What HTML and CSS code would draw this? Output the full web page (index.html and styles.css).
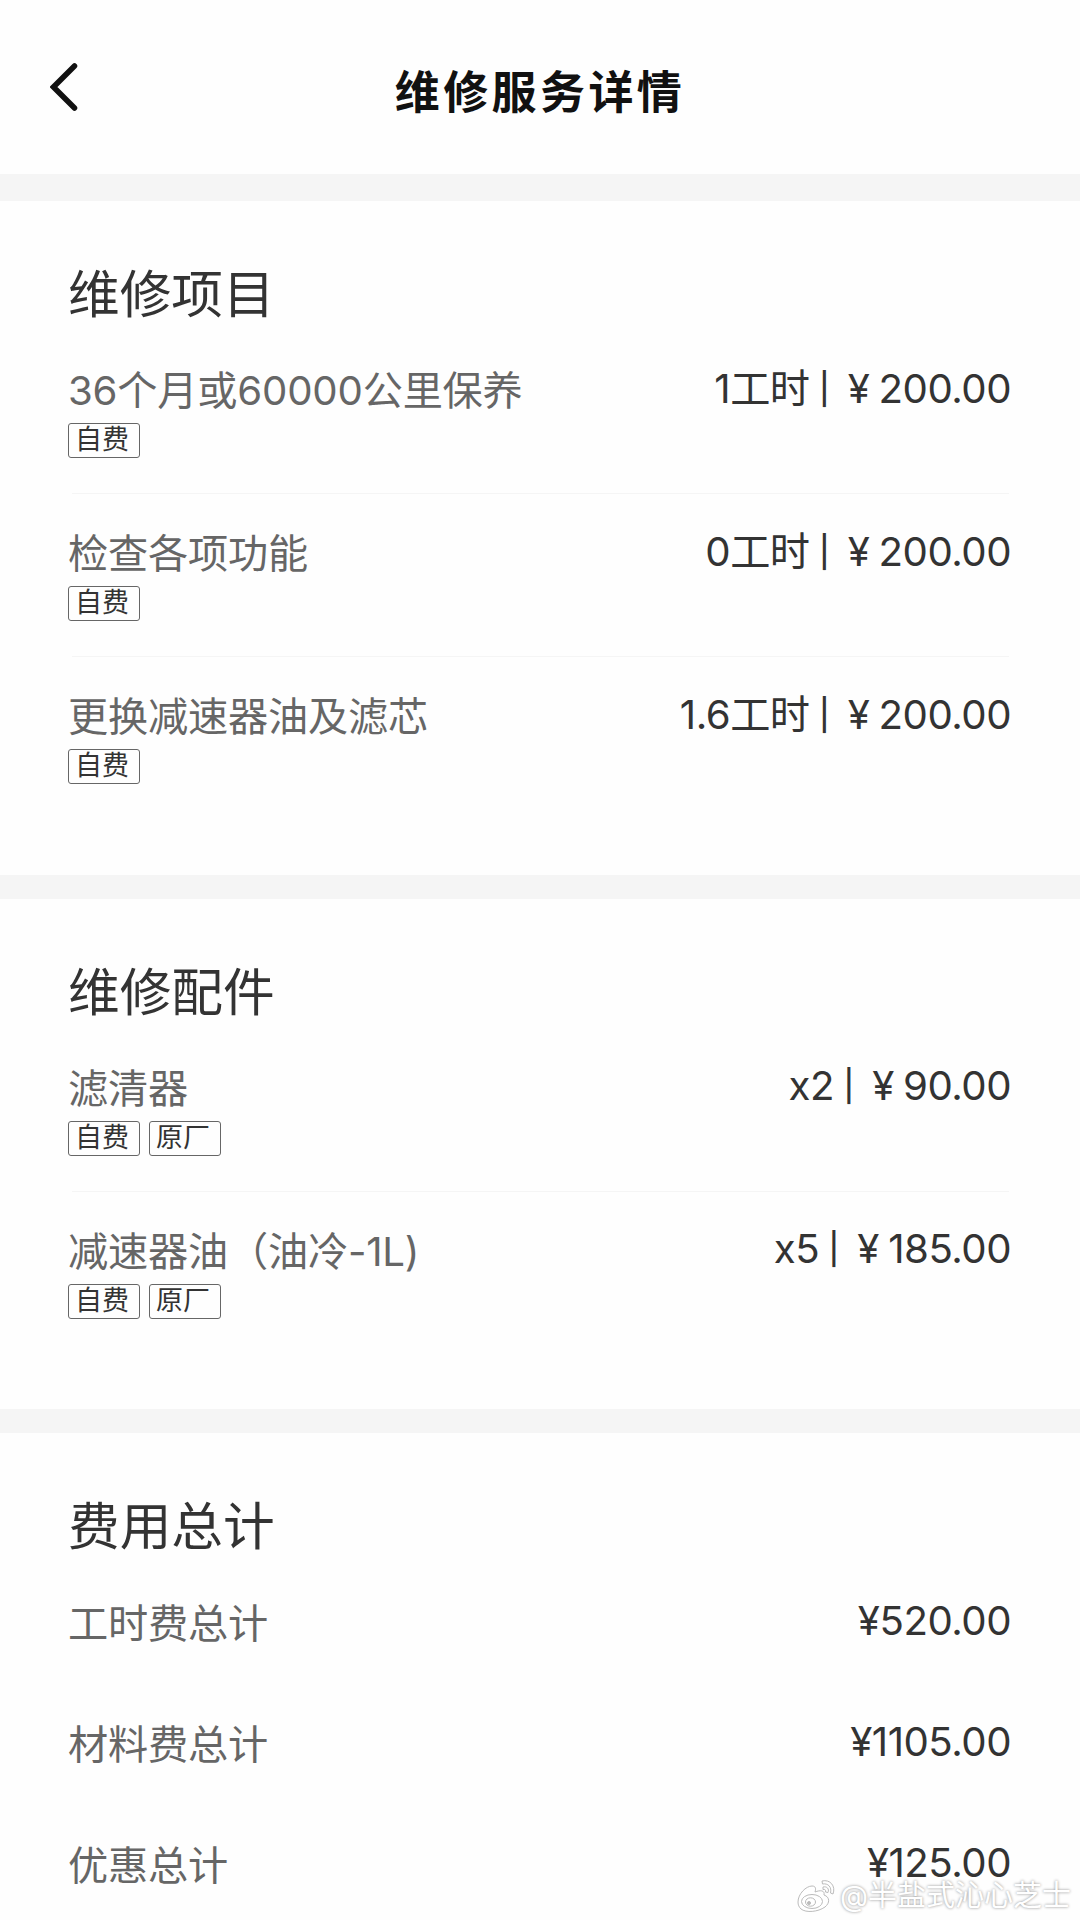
FILE: index.html
```html
<!DOCTYPE html>
<html lang="zh-CN">

<head>
  <meta charset="UTF-8">
  <meta name="viewport" content="width=device-width, initial-scale=1.0">
  <title>维修服务详情</title>
  <link rel="stylesheet" href="styles.css">
</head>

<body>
  <header class="header">
    <svg class="back" viewBox="0 0 28 48">
      <path d="M24.5 3 L3.5 24 L24.5 45" />
    </svg>
    <h1 class="title">维修服务详情</h1>
  </header>

  <section class="section">
    <h2>维修项目</h2>
    <div class="item">
      <div class="line">
        <span class="name">36个月或60000公里保养</span>
        <span class="price">1工时<i class="sep">|</i><span class="yen">¥</span>200.00</span>
      </div>
      <div class="tags"><span class="tag">自费</span></div>
    </div>
    <div class="item">
      <div class="line">
        <span class="name">检查各项功能</span>
        <span class="price">0工时<i class="sep">|</i><span class="yen">¥</span>200.00</span>
      </div>
      <div class="tags"><span class="tag">自费</span></div>
    </div>
    <div class="item">
      <div class="line">
        <span class="name">更换减速器油及滤芯</span>
        <span class="price">1.6工时<i class="sep">|</i><span class="yen">¥</span>200.00</span>
      </div>
      <div class="tags"><span class="tag">自费</span></div>
    </div>
  </section>

  <section class="section">
    <h2>维修配件</h2>
    <div class="item">
      <div class="line">
        <span class="name">滤清器</span>
        <span class="price">x2<i class="sep">|</i><span class="yen">¥</span>90.00</span>
      </div>
      <div class="tags"><span class="tag">自费</span><span class="tag">原厂</span></div>
    </div>
    <div class="item">
      <div class="line">
        <span class="name">减速器油（油冷-1L)</span>
        <span class="price">x5<i class="sep">|</i><span class="yen">¥</span>185.00</span>
      </div>
      <div class="tags"><span class="tag">自费</span><span class="tag">原厂</span></div>
    </div>
  </section>

  <section class="section">
    <h2>费用总计</h2>
    <div class="total">
      <span class="name">工时费总计</span>
      <span class="price">¥520.00</span>
    </div>
    <div class="total">
      <span class="name">材料费总计</span>
      <span class="price">¥1105.00</span>
    </div>
    <div class="total">
      <span class="name">优惠总计</span>
      <span class="price">¥125.00</span>
    </div>
  </section>

  <div class="watermark">
    <svg class="weibo" viewBox="0 0 40 34">
      <path d="M2 23 C2 15 10 7 16 7 C20 7 20 10 19 13 C24 11 29 11 28 16 C34 18 34 24 29 28 C22 33 10 34 5 30 C3 28 2 26 2 23 Z" />
      <ellipse cx="16" cy="22.5" rx="10.5" ry="7" />
      <ellipse cx="14.5" cy="23" rx="5" ry="4.2" />
      <circle class="pupil" cx="13" cy="24" r="1.5" />
      <path d="M26 2 C34 0 40 7 37 15 L34.5 14 C36 8 32 4 26.5 5 Z" />
      <path d="M27 8 C31 7 33.5 10 32 13.5 L29.5 13 C30 11 29 10 27 10.5 Z" />
    </svg>
    <span>@半盐式沁心芝士</span>
  </div>
</body>

</html>
```

FILE: styles.css
```css
* {
  box-sizing: border-box;
}

body {
  margin: 0;
  height: 1920px;
  overflow: hidden;
  position: relative;
  background-color: #fefefe;
  color: #333;
  font-family: Inter, "Noto Sans CJK SC", sans-serif;
}

.header {
  display: grid;
  grid-template-columns: 120px 1fr 120px;
  align-items: center;
  height: 174px;
}

.back {
  width: 28px;
  height: 48px;
  margin-left: 50px;
  fill: none;
  stroke: #111;
  stroke-width: 5.5;
  stroke-linecap: round;
}

.title {
  margin: 0;
  padding-top: 11px;
  font-size: 45px;
  line-height: 60px;
  letter-spacing: 3.4px;
  text-align: center;
  color: #111;
}

.section {
  border-top: 24px solid #f5f5f5;
  padding: 63px 69px 54px 68px;
}

.header + .section {
  border-top-width: 27px;
}

h2 {
  margin: 0 0 7px;
  font-size: 51.7px;
  font-weight: 400;
  line-height: 60px;
}

.item {
  display: flex;
  flex-direction: column;
  height: 163.2px;
  padding-top: 30px;
}

.item::after {
  content: "";
  height: 1px;
  margin: auto 2px 0 4px;
  background-color: #f5f5f5;
}

.item:last-child::after {
  display: none;
}

.line,
.total {
  display: flex;
  justify-content: space-between;
  align-items: center;
  font-size: 40.2px;
  line-height: 60px;
}

.total {
  height: 121px;
  padding-top: 1px;
}

.name {
  color: #666;
  letter-spacing: -0.2px;
}

.price {
  margin-top: -5px;
  letter-spacing: -0.5px;
}

.sep {
  display: inline-block;
  width: 29px;
  font-size: 31px;
  font-style: normal;
  font-weight: 500;
  line-height: 40px;
  text-align: center;
  vertical-align: 3px;
}

.yen {
  display: inline-block;
  width: 40px;
  text-align: center;
}

.tags {
  display: flex;
  gap: 9px;
  margin-top: 2px;
}

.tag {
  width: 72px;
  height: 35px;
  padding-left: 6px;
  border: 1px solid #666;
  border-radius: 3px;
  font-size: 27px;
  line-height: 31px;
}

.watermark {
  position: absolute;
  right: 9px;
  bottom: 6px;
  display: flex;
  align-items: center;
  gap: 4px;
  font-size: 29px;
  line-height: 36px;
  color: #fff;
  text-shadow: 0 0 3px #888;
}

.weibo {
  width: 40px;
  height: 34px;
  fill: #fff;
  stroke: #bbb;
  stroke-width: 1;
}

.pupil {
  fill: #bbb;
}
```
